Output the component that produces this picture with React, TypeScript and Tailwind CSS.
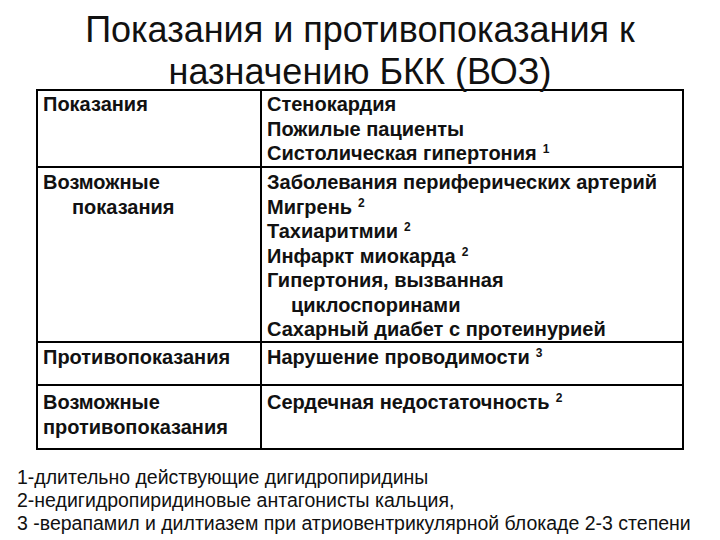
import React from "react";

const sup = (n: string) => (
  <span className="relative -top-[7px] text-[12px] ml-[6px] leading-none">{n}</span>
);

export default function App() {
  return (
    <div
      className="w-[720px] h-[540px] bg-white text-black overflow-hidden relative"
      style={{ fontFamily: '"Liberation Sans", Arial, sans-serif' }}
    >
      <div className="pt-[9px] text-center text-[36px] leading-[42px] text-[#111]">
        <div>Показания и противопоказания к</div>
        <div>назначению БКК (ВОЗ)</div>
      </div>
      <div className="mx-[36px] w-[648px] mt-[-4px] border-2 border-black grid grid-cols-[224px_1fr] grid-rows-[77px_175px_43px_62px] text-[20px] font-bold leading-[24.5px] text-[#111]">
        <div className="border-r-2 border-b-2 border-black pl-[5px] pt-[1px]">Показания</div>
        <div className="border-b-2 border-black pl-[5px] pt-[1px]">
          <div>Стенокардия</div>
          <div>Пожилые пациенты</div>
          <div>Систолическая гипертония{sup("1")}</div>
        </div>
        <div className="border-r-2 border-b-2 border-black pl-[5px] pt-[2px]">
          <div>Возможные</div>
          <div className="pl-[29px]">показания</div>
        </div>
        <div className="border-b-2 border-black pl-[5px] pt-[2px]">
          <div>Заболевания периферических артерий</div>
          <div>Мигрень{sup("2")}</div>
          <div>Тахиаритмии{sup("2")}</div>
          <div>Инфаркт миокарда{sup("2")}</div>
          <div>Гипертония, вызванная</div>
          <div className="pl-[24px]">циклоспоринами</div>
          <div>Сахарный диабет с протеинурией</div>
        </div>
        <div className="border-r-2 border-b-2 border-black pl-[5px] pt-[2px]">Противопоказания</div>
        <div className="border-b-2 border-black pl-[5px] pt-[2px]">Нарушение проводимости{sup("3")}</div>
        <div className="border-r-2 border-black pl-[5px] pt-[4px]">
          <div>Возможные</div>
          <div>противопоказания</div>
        </div>
        <div className="pl-[5px] pt-[4px]">Сердечная недостаточность{sup("2")}</div>
      </div>
      <div className="pl-[17px] pt-[16px] text-[19.5px] leading-[23px] text-[#111]">
        <div>1-длительно действующие дигидропиридины</div>
        <div>2-недигидропиридиновые антагонисты кальция,</div>
        <div>3 -верапамил и дилтиазем при атриовентрикулярной блокаде 2-3 степени</div>
      </div>
    </div>
  );
}
